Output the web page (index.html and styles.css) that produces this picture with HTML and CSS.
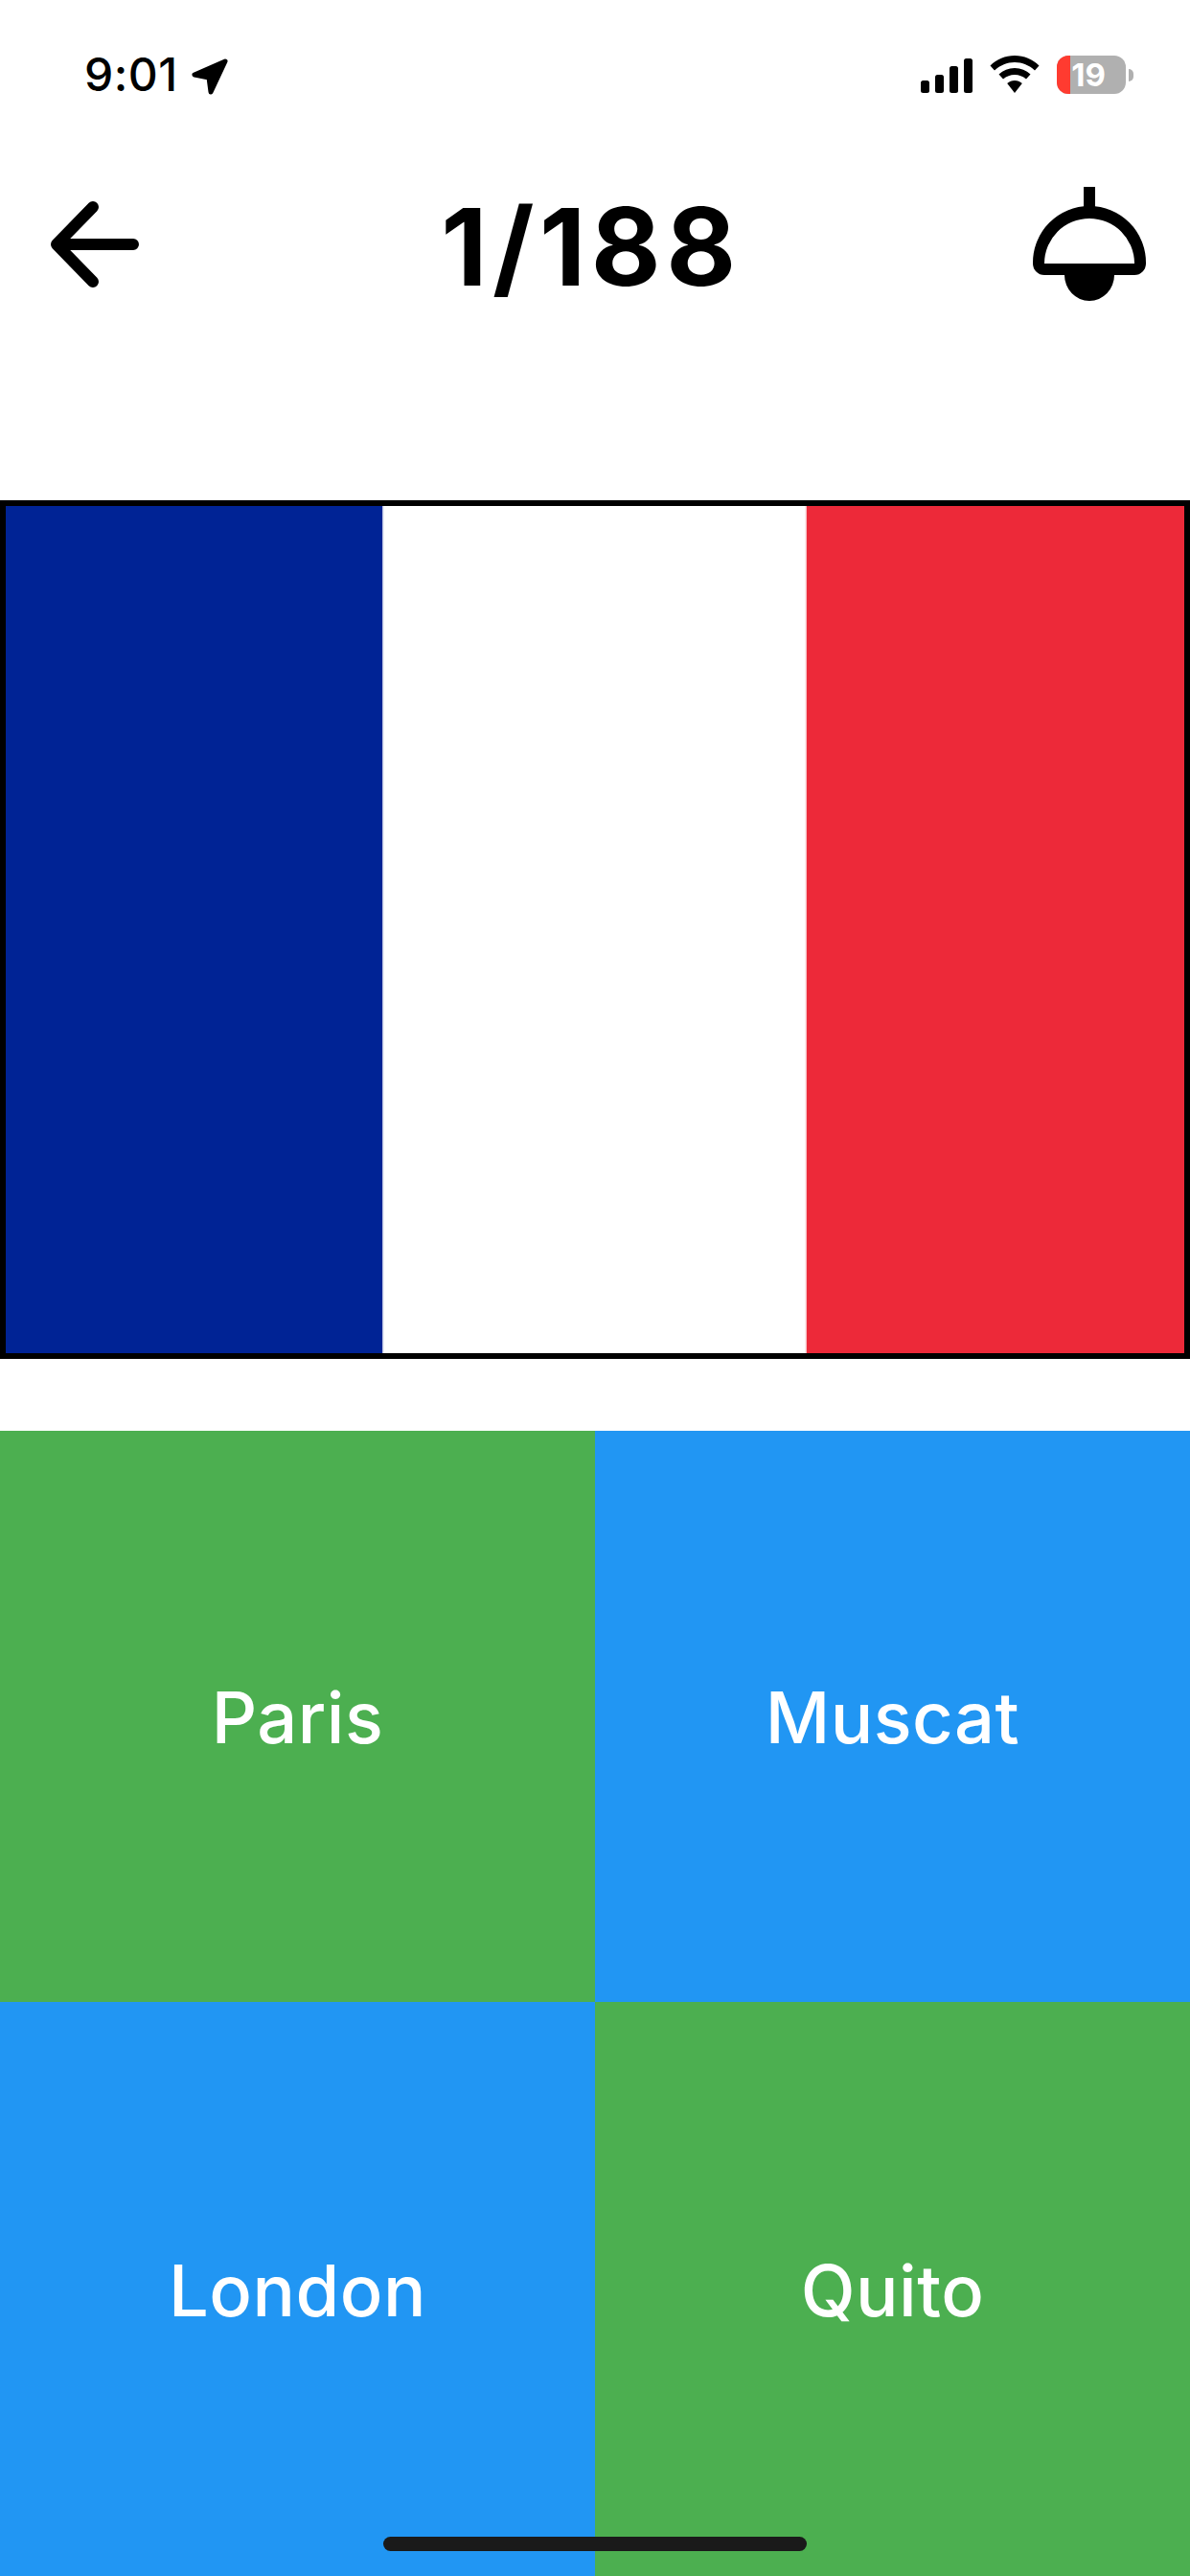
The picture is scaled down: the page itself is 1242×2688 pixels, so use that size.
FILE: index.html
```html
<!DOCTYPE html>
<html lang="en">
<head>
<meta charset="utf-8">
<title>Capital quiz</title>
<link rel="stylesheet" href="styles.css">
</head>
<body>
<main class="screen">
  <div class="status">
    <div class="status-left">
      <span class="time">9:01</span>
      <svg class="loc" width="42" height="42" viewBox="0 0 42 42"><path d="M37 7 5 21 20 24 22 39Z" fill="#000" stroke="#000" stroke-width="5" stroke-linejoin="round"/></svg>
    </div>
    <div class="status-right">
      <svg class="signal" width="54" height="36" viewBox="0 0 54 36"><rect x="0" y="23" width="9" height="13" rx="2.500"/><rect x="15" y="17" width="9" height="19" rx="2.500"/><rect x="30" y="8" width="9" height="28" rx="2.500"/><rect x="45" y="0" width="9" height="36" rx="2.500"/></svg>
      <svg class="wifi" width="52" height="40" viewBox="0 0 52 40"><path d="M26 0C16 0 7.500 3.800 0.500 10.500L5 15.500C11 10 18 7 26 7S41 10 47 15.500L51.500 10.500C44.500 3.800 36 0 26 0Z"/><path d="M26 13C19.500 13 14 15.300 9.500 19.500L14 24.500C17.500 21.500 21.500 20 26 20S34.500 21.500 38 24.500L42.500 19.500C38 15.300 32.500 13 26 13Z"/><path d="M26 26C23 26 20.500 27 18.200 29L26 39 33.800 29C31.500 27 29 26 26 26Z"/></svg>
      <div class="battery">
        <div class="battery-body">
          <span class="battery-level"></span>
          <span class="battery-num">19</span>
        </div>
        <span class="battery-cap"></span>
      </div>
    </div>
  </div>

  <header class="bar">
    <svg class="back" width="106" height="92" viewBox="0 0 106 92"><path d="M93 46H14M51 7 13 46 51 85" fill="none" stroke="#000" stroke-width="12" stroke-linecap="round" stroke-linejoin="round"/></svg>
    <h1 class="title">1/188</h1>
    <svg class="lamp" width="118" height="119" viewBox="0 0 118 119"><rect x="53" y="0" width="12" height="24"/><path fill-rule="evenodd" d="M0 79A59 59 0 0 1 118 79V80A12 12 0 0 1 106 92H85A26 27 0 0 1 33 92H12A12 12 0 0 1 0 80ZM12 80H106A47 47 0 0 0 12 80Z"/></svg>
  </header>

  <section class="flag">
    <span class="stripe stripe-blue"></span>
    <span class="stripe stripe-white"></span>
    <span class="stripe stripe-red"></span>
  </section>

  <section class="answers">
    <button class="answer green">Paris</button>
    <button class="answer blue">Muscat</button>
    <button class="answer blue">London</button>
    <button class="answer green">Quito</button>
  </section>

  <div class="home"></div>
</main>
</body>
</html>
```
FILE: styles.css
```css
* { box-sizing: border-box; }
html, body { margin: 0; padding: 0; background: #fff; }
.screen {
  position: relative;
  width: 1242px;
  height: 2688px;
  display: flex;
  flex-direction: column;
  overflow: hidden;
  font-family: Inter, "Liberation Sans", sans-serif;
  color: #000;
}
.status {
  height: 100px;
  padding: 58px 59px 0 88px;
  display: flex;
  justify-content: space-between;
  align-items: flex-start;
}
.status-left { display: flex; align-items: center; gap: 12px; height: 40px; }
.time { font-size: 48px; line-height: 40px; font-weight: 500; letter-spacing: 0.5px; }
.status-right { display: flex; align-items: flex-start; }
.signal { margin-top: 3px; margin-right: 18px; }
.wifi { margin-right: 18px; }
.battery { display: flex; align-items: center; height: 40px; }
.battery-body {
  position: relative;
  width: 72px;
  height: 40px;
  border-radius: 12px;
  background: #b0b0b0;
  overflow: hidden;
  display: flex;
  align-items: center;
  justify-content: center;
}
.battery-level { position: absolute; left: 0; top: 0; bottom: 0; width: 14px; background: #ff3b30; }
.battery-num { position: relative; color: #fff; font-size: 33px; font-weight: 700; line-height: 40px; margin-right: 6px; }
.battery-cap { width: 5px; height: 13px; margin-left: 3px; background: #b0b0b0; border-radius: 0 6px 6px 0; }

.bar {
  height: 422px;
  padding: 95px 46px 0 46px;
  display: flex;
  justify-content: space-between;
  align-items: flex-start;
}
.back { margin-top: 14px; }
.title {
  margin: 2px 0 0 4px;
  font-size: 112px;
  line-height: 120px;
  font-weight: 700;
  letter-spacing: 5.500px;
}
.flag {
  height: 896px;
  border: 6px solid #000;
  display: grid;
  grid-template-columns: 393px 443px 394px;
}
.stripe-blue { background: #002395; }
.stripe-white { background: linear-gradient(90deg, #aab3dc, #fff 2px, #fff calc(100% - 2px), #f5a9b0); }
.stripe-red { background: #ed2939; }

.answers {
  margin-top: 75px;
  flex: 1;
  display: grid;
  grid-template-columns: 621px 621px;
  grid-template-rows: 596px 599px;
}
.answer {
  border: 0;
  margin: 0;
  padding: 2px 0 0;
  color: #fff;
  font-family: inherit;
  font-size: 74px;
  font-weight: 500;
  letter-spacing: 0.5px;
}
.green { background: #4caf50; }
.blue { background: #2196f3; }
.home {
  position: absolute;
  left: 400px;
  top: 2647px;
  width: 442px;
  height: 15px;
  border-radius: 8px;
  background: #1a1a1a;
}
```
